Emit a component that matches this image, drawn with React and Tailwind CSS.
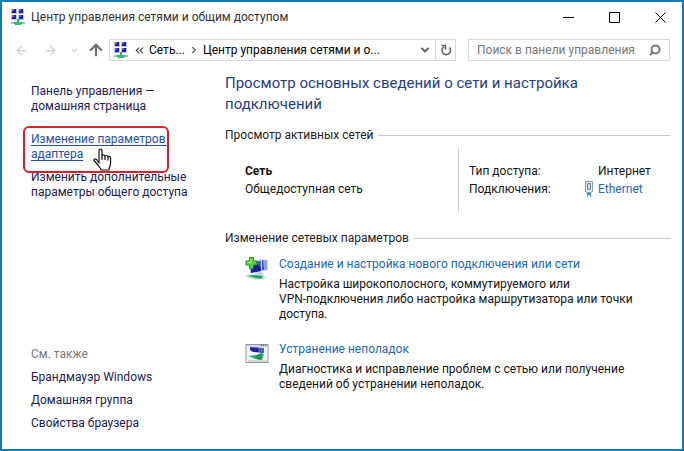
import React from 'react';
import { ArrowLeft, ArrowRight, ArrowUp, ChevronDown, ChevronRight, ChevronsLeft, Search } from 'lucide-react';

// Four small monitors standing on a green network cable
function NetworkIcon() {
  return (
    <svg className="h-4 w-4 shrink-0" viewBox="0 0 16 16" aria-hidden="true">
      {[[1, 0], [8, 0], [1, 6], [8, 6]].map(([x, y]) => (
        <g key={`${x}-${y}`}>
          <rect x={x} y={y} width="6" height="5" fill="#b9c3dc" />
          <rect x={x + 1} y={y} width="4" height="4" fill="#20209a" />
          <rect x={x + 1} y={y} width="2" height="2" fill="#5b6fd0" />
        </g>
      ))}
      <path d="M7 10h2v3h5v2H2v-2h5z" fill="#35a56b" />
      <path d="M5 13h6v3H5z" fill="#2fbd74" />
      <path d="M1 13h3v2H1zM12 13h3v2h-3z" fill="#8ccbb0" />
    </svg>
  );
}

function NewConnectionIcon() {
  return (
    <svg className="h-6 w-6" viewBox="0 0 24 24" aria-hidden="true">
      <path d="M13 2l10 1v10l-9 2z" fill="#c7cfe6" />
      <path d="M14 3l8 1v8l-8 2z" fill="#3046b4" />
      <path d="M18 3.500l4 .5v8l-3 1z" fill="#8aa4e8" />
      <path d="M4 4l13-1v12L5 17z" fill="#dfe4f2" />
      <path d="M5 5l11-1v10L6 16z" fill="#1c1c98" />
      <path d="M11 4.500l5-.5v7z" fill="#4a62cf" />
      <path d="M10 16l6-1 3 2-6 1z" fill="#c3c8ce" />
      <path d="M0 18l8-1 3 1 7-1 2 3-1 3-4-1-4 1-8-2z" fill="#c2e2d3" />
      <path d="M3 19l7-1 8 1-2 3-5-1z" fill="#1fa265" />
      <path d="M4.500.5h4V4H12v4H8.500v3.500h-4V8H1V4h3.500z" fill="#5cd13c" stroke="#258a22" />
      <path d="M6 2v3.500H2.500" stroke="#b7f39d" fill="none" />
    </svg>
  );
}

function TroubleshootIcon() {
  return (
    <svg className="h-6 w-6" viewBox="0 0 24 24" aria-hidden="true">
      <rect x="1" y="2.500" width="22" height="18" fill="#f4f6f8" stroke="#8d949c" />
      <path d="M2 3h20v2H2z" fill="#cfd8e4" />
      <path d="M16 3h1v1h-1zM18 3h1v1h-1zM20 3h1v1h-1z" fill="#3c4666" />
      <path d="M5 5l14 1v5L8 10 5 8z" fill="#20269a" />
      <path d="M13 6l6 0v5l-5-1z" fill="#4a64c8" />
      <path d="M3 14l9-1 4-2 3 1-2 6-7-1z" fill="#35b877" />
      <path d="M10 14l7-3-1 7-4-1z" fill="#1f9259" />
      <path d="M3 18h19v2H3z" fill="#d5dade" />
    </svg>
  );
}

function EthernetIcon() {
  return (
    <svg className="h-4 w-3" viewBox="0 0 12 16" aria-hidden="true">
      <path d="M2.500.5h7v10l-2 1h-3l-2-1z" fill="#e4ebf1" stroke="#8499aa" />
      <path d="M4.500 2.500h3v6h-3z" fill="#c9d6e0" stroke="#71899c" />
      <path d="M4 12h4v2H4z" fill="#2d9aa4" />
      <path d="M4 14h1v2H4zM7 14h1v2H7z" fill="#5eaab0" />
    </svg>
  );
}

function RefreshIcon() {
  return (
    <svg className="h-3 w-3" viewBox="0 0 12 12" fill="none" stroke="currentColor" strokeWidth="1.600" aria-hidden="true">
      <path d="M9.500 3.500a4.300 4.300 0 1 1-5.500-.8" />
      <path d="M1.500 1.500h4v4" />
    </svg>
  );
}

function HandCursor() {
  return (
    <svg className="absolute left-[62px] top-4 h-6 w-[19px]" viewBox="0 0 19 24" aria-hidden="true">
      <path
        d="M6 15V2.500C6 .6 9 .6 9 2.500V8c0-1.500 3-1.500 3 .5 0-1.500 3-1.300 3 .6 0-1.300 2.600-1 2.600.9V15c0 3-1.600 4-1.600 7H8c0-2-2-3-3.500-5.500L1.300 13c-1-1.700 1-2.700 2.200-1.500z"
        fill="#fff"
        stroke="#111"
        strokeWidth="1.200"
        strokeLinejoin="round"
      />
      <path d="M9 8v4M12 8.500V12M15 9v3.500" stroke="#111" strokeWidth="1.200" fill="none" />
    </svg>
  );
}

const seeAlso = ['Брандмауэр Windows', 'Домашняя группа', 'Свойства браузера'];

const tasks = [
  {
    icon: NewConnectionIcon,
    title: 'Создание и настройка нового подключения или сети',
    description: 'Настройка широкополосного, коммутируемого или\nVPN-подключения либо настройка маршрутизатора или точки доступа.',
  },
  {
    icon: TroubleshootIcon,
    title: 'Устранение неполадок',
    description: 'Диагностика и исправление проблем с сетью или получение сведений об устранении неполадок.',
  },
];

function TitleBar() {
  return (
    <header className="flex h-[30px] items-center pl-2 pr-4">
      <NetworkIcon />
      <h1 className="ml-[5px] grow text-[#333]">Центр управления сетями и общим доступом</h1>
      <div className="flex gap-[35px] text-black">
        <button aria-label="Свернуть">
          <svg className="h-[11px] w-[11px]" viewBox="0 0 11 11"><path d="M0 5.500h11" stroke="currentColor" /></svg>
        </button>
        <button aria-label="Развернуть">
          <svg className="h-[11px] w-[11px]" viewBox="0 0 11 11"><path d="M.5.5h10v10H.5z" fill="none" stroke="currentColor" /></svg>
        </button>
        <button aria-label="Закрыть">
          <svg className="h-[11px] w-[11px]" viewBox="0 0 11 11"><path d="M.5.5l10 10M10.500.5l-10 10" stroke="currentColor" /></svg>
        </button>
      </div>
    </header>
  );
}

function NavBar() {
  return (
    <nav className="mt-[7px] flex h-[22px] items-center pl-3 pr-3">
      <button aria-label="Назад" className="text-[#d0d0d0]"><ArrowLeft size={15} /></button>
      <button aria-label="Вперед" className="ml-[14px] text-[#d0d0d0]"><ArrowRight size={15} /></button>
      <button aria-label="Последние расположения" className="ml-3 text-[#cfcfcf]"><ChevronDown size={9} strokeWidth={3} /></button>
      <button aria-label="Вверх" className="ml-2 text-[#6e6e6e]"><ArrowUp size={18} strokeWidth={3} /></button>
      <div className="ml-1 flex h-full grow items-center border border-[#d9d9d9] pl-[3px]">
        <NetworkIcon />
        <ChevronsLeft size={13} className="ml-1 text-[#444]" />
        <button className="ml-[3px] text-black">Сеть...</button>
        <ChevronRight size={10} strokeWidth={3} className="mx-1 text-[#555]" />
        <button className="text-black">Центр управления сетями и о...</button>
        <button aria-label="Список" className="ml-auto mr-1 text-[#666]"><ChevronDown size={12} strokeWidth={4} /></button>
        <button aria-label="Обновить" className="flex h-full w-5 items-center justify-center border-l border-[#d9d9d9] text-[#666]">
          <RefreshIcon />
        </button>
      </div>
      <form className="ml-3 flex h-full w-[202px] items-center border border-[#d9d9d9] pl-2 pr-2">
        <input
          type="text"
          aria-label="Поиск в панели управления"
          placeholder="Поиск в панели управления"
          className="w-full min-w-0 grow bg-transparent outline-none placeholder:text-[#767676]"
        />
        <button type="button" aria-label="Найти" className="text-[#777]"><Search size={12} strokeWidth={4} className="-scale-x-100" /></button>
      </form>
    </nav>
  );
}

function Sidebar() {
  return (
    <aside className="flex w-[223px] shrink-0 flex-col items-start pb-[18px] pl-[29px] pt-[23px] text-[#1d1a50]">
      <a href="#home">Панель управления —<br />домашняя страница</a>
      <a href="#adapter" className="relative mt-[18px] text-[#2450a4] underline underline-offset-2">
        Изменение параметров&nbsp;<br />адаптера
        <span className="absolute -left-2 -top-[6px] h-[47px] w-[146px] rounded-md border-2 border-[#d3222c]" />
        <HandCursor />
      </a>
      <a href="#sharing" className="mt-2">Изменить дополнительные<br />параметры общего доступа</a>
      <h2 className="mt-auto text-[#777]">См. также</h2>
      {seeAlso.map((item) => (
        <a key={item} href="#see-also" className="mt-2">{item}</a>
      ))}
    </aside>
  );
}

function SectionTitle({ children }) {
  return (
    <h3 className="flex items-center gap-[5px] text-[#222] after:h-px after:grow after:bg-[#c8c8c8]">{children}</h3>
  );
}

function App() {
  return (
    <div className="flex min-h-screen flex-col border-2 border-[#107cb5] bg-white font-['Roboto',sans-serif] text-[12px] leading-[15px]">
      <TitleBar />
      <NavBar />
      <div className="flex grow">
        <Sidebar />
        <main className="grow pr-[11px] pt-3 text-[#151515]">
          <h2 className="mb-[13px] text-[15px] leading-[21px] text-[#1f4080]">
            Просмотр основных сведений о сети и настройка<br />подключений
          </h2>

          <SectionTitle>Просмотр активных сетей</SectionTitle>
          <div className="mb-[19px] mt-[5px] flex h-16 pl-5 leading-[18px]">
            <div className="grow pt-[14px]">
              <p className="font-bold">Сеть</p>
              <p>Общедоступная сеть</p>
            </div>
            <dl className="grid w-[213px] grid-cols-[114px_1fr] content-start border-l border-[#c8c8c8] pl-[10px] pt-[14px]">
              <dt>Тип доступа:</dt>
              <dd className="pl-[15px]">Интернет</dd>
              <dt>Подключения:</dt>
              <dd className="flex items-center gap-[3px]">
                <EthernetIcon />
                <a href="#ethernet" className="text-[#2568ae]">Ethernet</a>
              </dd>
            </dl>
          </div>

          <SectionTitle>Изменение сетевых параметров</SectionTitle>
          <div className="mt-[11px] flex flex-col gap-5 pl-5">
            {tasks.map((task) => (
              <section key={task.title} className="flex gap-[10px]">
                <div className="shrink-0"><task.icon /></div>
                <div>
                  <a href="#task" className="block text-[#2568ae]">{task.title}</a>
                  <p className="mt-[5px] max-w-[360px] whitespace-pre-line">{task.description}</p>
                </div>
              </section>
            ))}
          </div>
        </main>
      </div>
    </div>
  );
}

export default App;
